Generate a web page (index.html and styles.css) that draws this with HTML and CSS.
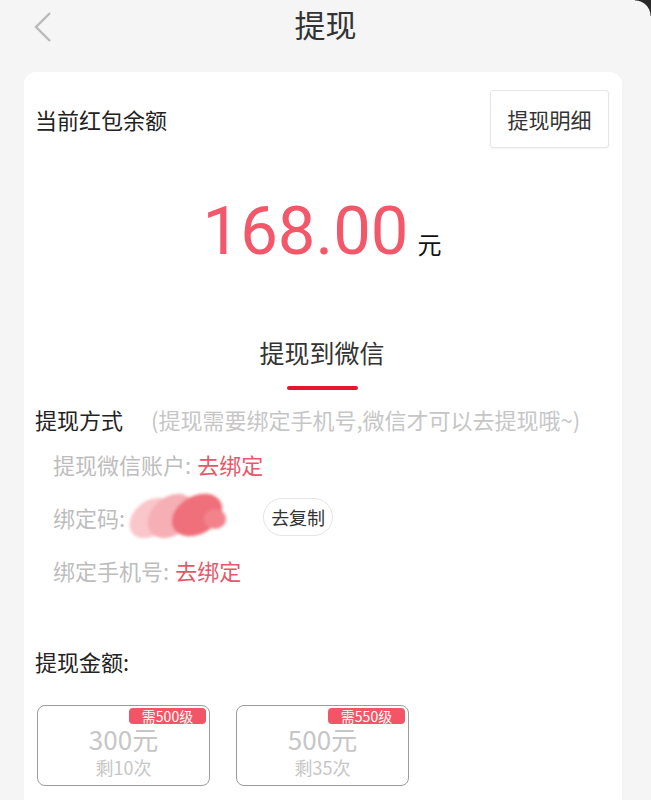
FILE: index.html
```html
<!DOCTYPE html>
<html>
<head>
    <meta charset="utf-8">
    <title>提现</title>
    <link rel="stylesheet" href="styles.css">
</head>
<body>
    <div class="screen-corner"></div>
    <div class="header">
        <span class="back">
            <svg width="20" height="32" viewBox="0 0 20 32"><path d="M17 2 L3 16 L17 30" fill="none" stroke="#b9b9b9" stroke-width="2.4"/></svg>
        </span>
        <h1>提现</h1>
    </div>

    <div class="card">
        <div class="balance-row">
            <span class="balance-label">当前红包余额</span>
            <button class="detail-btn">提现明细</button>
        </div>

        <div class="amount">
            <span class="amount-num">168.00</span><span class="amount-unit">元</span>
        </div>

        <div class="tab">
            <div class="tab-text">提现到微信</div>
            <div class="tab-line"></div>
        </div>

        <div class="method">
            <span class="method-title">提现方式</span>
            <span class="method-hint">(提现需要绑定手机号,微信才可以去提现哦~)</span>
        </div>

        <div class="info-list">
            <div class="info-row">
                <span class="info-label">提现微信账户:</span>
                <span class="info-link">去绑定</span>
            </div>
            <div class="info-row">
                <span class="info-label">绑定码:</span>
                <span class="code-mask">
                    <svg width="112" height="58" viewBox="0 0 112 58">
                        <defs>
                            <filter id="soft"><feGaussianBlur stdDeviation="1.4"/></filter>
                        </defs>
                        <g filter="url(#soft)">
                            <ellipse cx="30" cy="30" rx="24" ry="17" transform="rotate(-40 30 30)" fill="#f9c6ca"/>
                            <ellipse cx="50" cy="28" rx="26" ry="19" transform="rotate(-40 50 28)" fill="#f6afb5"/>
                            <ellipse cx="76" cy="27" rx="27" ry="19" transform="rotate(-30 76 27)" fill="#ef6f7a"/>
                            <ellipse cx="94" cy="31" rx="11" ry="10" fill="#f2838d"/>
                        </g>
                    </svg>
                </span>
                <button class="copy-btn">去复制</button>
            </div>
            <div class="info-row">
                <span class="info-label">绑定手机号:</span>
                <span class="info-link">去绑定</span>
            </div>
        </div>

        <div class="sum-title">提现金额:</div>

        <div class="options">
            <div class="option">
                <span class="badge">需500级</span>
                <div class="option-money">300元</div>
                <div class="option-times">剩10次</div>
            </div>
            <div class="option">
                <span class="badge">需550级</span>
                <div class="option-money">500元</div>
                <div class="option-times">剩35次</div>
            </div>
        </div>
    </div>
</body>
</html>
```

FILE: styles.css
```css
body {
    margin: 0;
    background: #f5f5f5;
    font-family: "Noto Sans CJK SC", sans-serif;
    color: #222;
}

/* rounded corner of the phone screen */
.screen-corner {
    position: absolute;
    top: 0;
    right: 0;
    width: 16px;
    height: 16px;
    background: radial-gradient(circle at 0 100%, transparent 15px, #2a2a2a 16px);
}

.header {
    position: relative;
    height: 52px;
    text-align: center;
}

.header h1 {
    margin: 0;
    font-size: 31px;
    font-weight: 400;
    line-height: 48px;
    color: #333;
}

.back {
    position: absolute;
    left: 33px;
    top: 11px;
}

.card {
    background: #fff;
    border-radius: 12px;
    margin: 20px 29px 0 24px;
    padding: 18px 13px 20px 11px;
    height: 760px;
}

.balance-row {
    display: flex;
    justify-content: space-between;
    align-items: center;
}

.balance-label {
    font-size: 22px;
}

.detail-btn {
    width: 119px;
    height: 58px;
    background: #fff;
    border: 1px solid #e6e6e6;
    border-radius: 3px;
    font-family: inherit;
    font-size: 21px;
    color: #333;
    box-shadow: 0 1px 2px rgba(0, 0, 0, 0.05);
}

.amount {
    margin-top: 51px;
    text-align: center;
}

.amount-num {
    font-family: Roboto, sans-serif;
    font-size: 67px;
    line-height: 64px;
    color: #f2576a;
}

.amount-unit {
    font-size: 24px;
    margin-left: 9px;
    color: #111;
}

.tab {
    margin-top: 72px;
    display: flex;
    flex-direction: column;
    align-items: center;
}

.tab-text {
    font-size: 25px;
    color: #333;
    line-height: 34px;
}

.tab-line {
    width: 71px;
    height: 4px;
    border-radius: 2px;
    background: #e6142d;
    margin-top: 17px;
}

.method {
    margin-top: 12px;
    display: flex;
    align-items: center;
    height: 34px;
}

.method-title {
    font-size: 22px;
    color: #222;
}

.method-hint {
    font-size: 22px;
    color: #c6c6c6;
    margin-left: 28px;
}

.info-list {
    margin-top: 1px;
}

.info-row {
    display: flex;
    align-items: center;
    height: 53px;
    padding-left: 18px;
    font-size: 22px;
}

.info-label {
    color: #bdbdbd;
}

.info-link {
    color: #e8566a;
    margin-left: 6px;
}

.code-mask {
    display: inline-flex;
    width: 112px;
    height: 32px;
    align-items: center;
    margin-left: -4px;
}

.copy-btn {
    margin-left: 30px;
    width: 70px;
    height: 38px;
    border: 1px solid #e4e4e4;
    border-radius: 19px;
    background: #fff;
    font-family: inherit;
    font-size: 18px;
    color: #333;
    padding: 0;
}

.sum-title {
    margin-top: 48px;
    font-size: 22px;
    line-height: 34px;
}

.options {
    display: flex;
    gap: 26px;
    margin-top: 27px;
    padding-left: 2px;
}

.option {
    position: relative;
    width: 171px;
    height: 79px;
    border: 1.5px solid #9c9c9c;
    border-radius: 8px;
    text-align: center;
}

.badge {
    position: absolute;
    right: 3px;
    top: 2px;
    width: 77px;
    height: 16px;
    line-height: 16px;
    background: #f25565;
    color: #fff;
    font-size: 14px;
    border-radius: 4px;
}

.option-money {
    margin-top: 20px;
    font-size: 26px;
    line-height: 26px;
    color: #c6c6c6;
}

.option-times {
    margin-top: 4px;
    font-size: 18px;
    line-height: 22px;
    color: #c6c6c6;
}
```
